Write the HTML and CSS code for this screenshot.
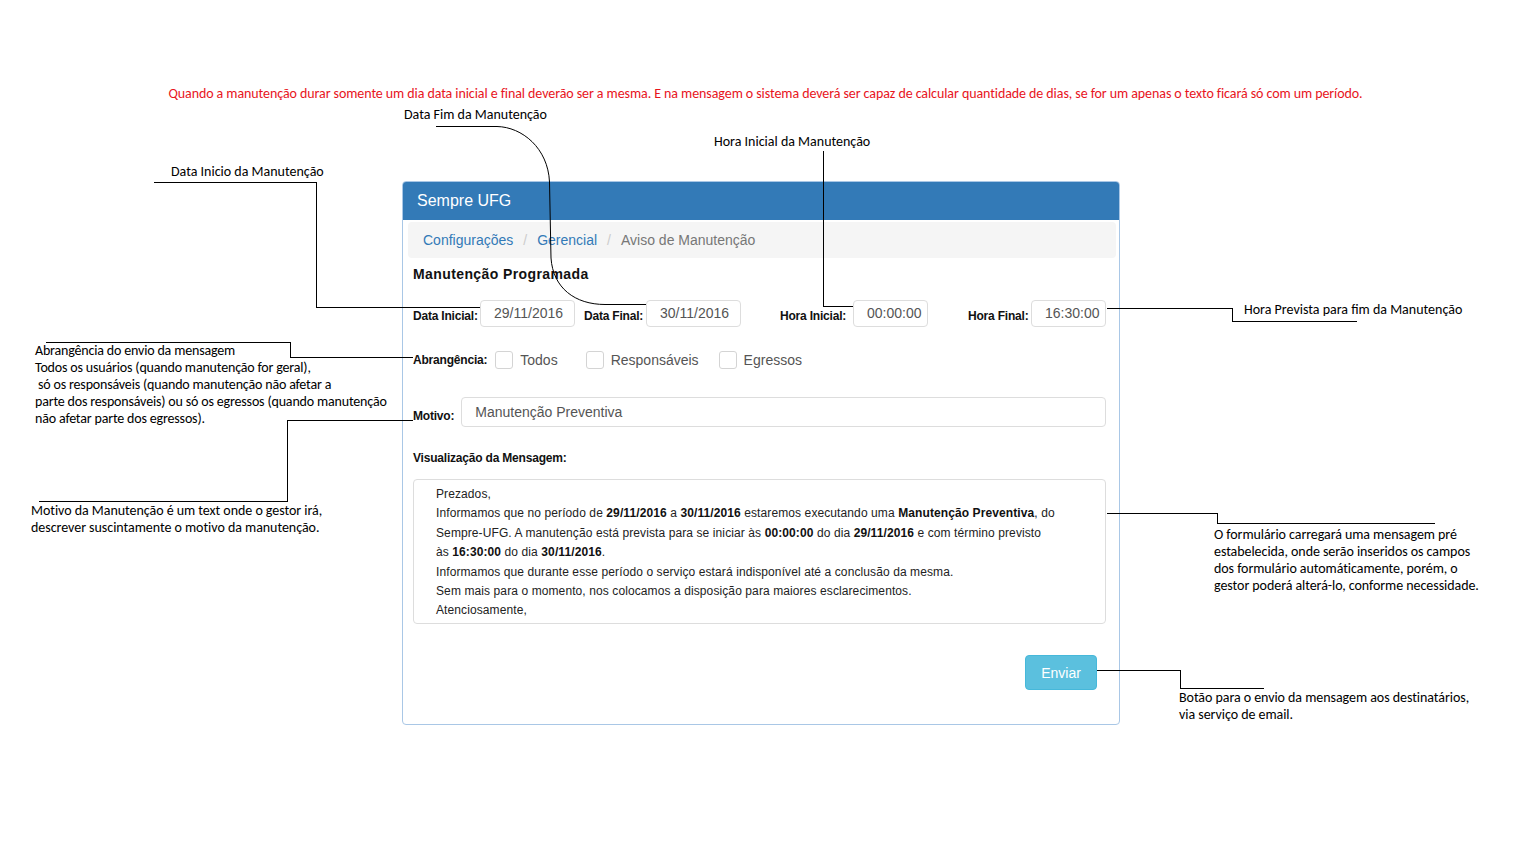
FILE: index.html
```html
<!DOCTYPE html>
<html lang="pt-BR">
<head>
<meta charset="utf-8">
<title>Sempre UFG - Aviso de Manutenção</title>
<link rel="stylesheet" href="styles.css">
</head>
<body>
<div class="canvas">
  <p class="note note-red">Quando a manutenção durar somente um dia data inicial e final deverão ser a mesma. E na mensagem o sistema deverá ser capaz de calcular quantidade de dias, se for um apenas o texto ficará só com um período.</p>

  <section class="panel">
    <header class="panel-heading">Sempre UFG</header>
    <div class="panel-body">
      <nav class="breadcrumb">
        <a class="crumb-link">Configurações</a><span class="crumb-sep">/</span><a class="crumb-link">Gerencial</a><span class="crumb-sep">/</span><span class="crumb-active">Aviso de Manutenção</span>
      </nav>
      <div class="form">
        <h2 class="form-title">Manutenção Programada</h2>
        <div class="row-dates">
          <div class="field g1"><label class="lbl">Data Inicial:</label><span class="input w95">29/11/2016</span></div>
          <div class="field g2"><label class="lbl">Data Final:</label><span class="input w95">30/11/2016</span></div>
          <div class="field g3"><label class="lbl">Hora Inicial:</label><span class="input w75">00:00:00</span></div>
          <div class="field g4"><label class="lbl">Hora Final:</label><span class="input w75">16:30:00</span></div>
        </div>
        <div class="row-scope">
          <label class="lbl">Abrangência:</label>
          <span class="check c1"></span><span class="check-text">Todos</span>
          <span class="check c2"></span><span class="check-text">Responsáveis</span>
          <span class="check c2b"></span><span class="check-text">Egressos</span>
        </div>
        <div class="row-motivo">
          <label class="lbl">Motivo:</label>
          <span class="input input-wide">Manutenção Preventiva</span>
        </div>
        <div class="lbl lbl-block">Visualização da Mensagem:</div>
        <div class="message">
          <p>Prezados,</p>
          <p>Informamos que no período de <b>29/11/2016</b> a <b>30/11/2016</b> estaremos executando uma <b>Manutenção Preventiva</b>, do</p>
          <p>Sempre-UFG. A manutenção está prevista para se iniciar às <b>00:00:00</b> do dia <b>29/11/2016</b> e com término previsto</p>
          <p>às <b>16:30:00</b> do dia <b>30/11/2016</b>.</p>
          <p>Informamos que durante esse período o serviço estará indisponível até a conclusão da mesma.</p>
          <p>Sem mais para o momento, nos colocamos a disposição para maiores esclarecimentos.</p>
          <p>Atenciosamente,</p>
        </div>
        <div class="actions"><button class="btn-send">Enviar</button></div>
      </div>
    </div>
  </section>

  <p class="note n-fim">Data Fim da Manutenção</p>
  <p class="note n-hini">Hora Inicial da Manutenção</p>
  <p class="note n-ini">Data Inicio da Manutenção</p>
  <p class="note n-hfim">Hora Prevista para fim da Manutenção</p>
  <p class="note n-abr">Abrangência do envio da mensagem<br>Todos os usuários (quando manutenção for geral),<br>&nbsp;só os responsáveis (quando manutenção não afetar a<br>parte dos responsáveis) ou só os egressos (quando manutenção<br>não afetar parte dos egressos).</p>
  <p class="note n-mot">Motivo da Manutenção é um text onde o gestor irá,<br>descrever suscintamente o motivo da manutenção.</p>
  <p class="note n-msg">O formulário carregará uma mensagem pré<br>estabelecida, onde serão inseridos os campos<br>dos formulário automáticamente, porém, o<br>gestor poderá alterá-lo, conforme necessidade.</p>
  <p class="note n-btn">Botão para o envio da mensagem aos destinatários,<br>via serviço de email.</p>

  <svg class="connectors" width="1531" height="857" viewBox="0 0 1531 857">
    <g fill="none" stroke="#000" stroke-width="1">
      <path class="crisp" d="M154 182.5 H316.5 V307.5 H480"/>
      <path d="M436 126.5 H497 C522 127 548 148 549.5 182 L551 258 C553 288 575 304.5 605 304.5 H646"/>
      <path class="crisp" d="M823.5 151 V306.5 H853"/>
      <path class="crisp" d="M1107 308.5 H1232.5 V321.5 H1357"/>
      <path class="crisp" d="M46 342.5 H290.5 V357.5 H413"/>
      <path class="crisp" d="M413 420.5 H287.5 V501.5 H39"/>
      <path class="crisp" d="M1107 513.5 H1217.5 V523.5 H1435"/>
      <path class="crisp" d="M1097 670.5 H1180.5 V688.5 H1264"/>
    </g>
  </svg>
</div>
</body>
</html>
```

FILE: styles.css
```css
* { box-sizing: border-box; }

html, body {
  margin: 0;
  padding: 0;
  background: #fff;
}

.canvas {
  position: relative;
  width: 1531px;
  height: 857px;
  overflow: hidden;
  padding-top: 181px;
  font-family: "Liberation Sans", Arial, sans-serif;
  color: #333;
}

/* ---------- annotations ---------- */
.note {
  position: absolute;
  margin: 0;
  font-family: Carlito, Lato, "Open Sans", sans-serif;
  font-size: 14px;
  line-height: 17px;
  color: #000;
  white-space: nowrap;
}
.note-red { left: 0; right: 0; top: 85px; text-align: center; color: #e8141c; letter-spacing: -0.08px; }
.n-fim { left: 404px; top: 106px; }
.n-hini { left: 714px; top: 133px; }
.n-ini { left: 171px; top: 163px; }
.n-hfim { left: 1244px; top: 301px; }
.n-abr { left: 35px; top: 342px; letter-spacing: -0.17px; }
.n-mot { left: 31px; top: 502px; letter-spacing: -0.04px; }
.n-msg { left: 1214px; top: 526px; letter-spacing: -0.06px; }
.n-btn { left: 1179px; top: 689px; letter-spacing: -0.05px; }

.connectors {
  position: absolute;
  left: 0;
  top: 0;
  z-index: 2;
  pointer-events: none;
}
.crisp { shape-rendering: crispEdges; }

/* ---------- panel ---------- */
.panel {
  margin-left: 402px;
  width: 718px;
  height: 544px;
  border: 1px solid #a9c7e6;
  border-radius: 4px;
  background: #fff;
  overflow: hidden;
}

.panel-heading {
  height: 38px;
  background: #337ab7;
  color: #fff;
  font-size: 16px;
  line-height: 38px;
  padding-left: 14px;
}

.panel-body {
  padding: 2px 3px 0 5px;
}

.breadcrumb {
  height: 36px;
  background: #f5f5f5;
  border-radius: 4px;
  padding: 0 15px;
  font-size: 14px;
  line-height: 36px;
  display: flex;
}
.crumb-link { color: #337ab7; }
.crumb-sep { color: #ccc; padding: 0 10px; }
.crumb-active { color: #777; }

.form {
  margin: 0 10px 0 5px;
}

.form-title {
  margin: 6px 0 0;
  font-size: 14px;
  line-height: 20px;
  font-weight: bold;
  color: #111;
  letter-spacing: 0.4px;
}

.lbl {
  font-size: 12px;
  font-weight: bold;
  color: #111;
  letter-spacing: -0.2px;
}

.input {
  display: block;
  height: 27px;
  border: 1px solid #ddd;
  border-radius: 4px;
  padding-left: 13px;
  font-size: 14px;
  line-height: 25px;
  color: #555;
  background: #fff;
}
.w95 { width: 95px; }
.w75 { width: 75px; }

.row-dates {
  display: flex;
  margin-top: 16px;
  height: 27px;
}
.field {
  display: flex;
  justify-content: space-between;
  align-items: center;
}
.field .lbl { padding-top: 5px; }
.g1 { width: 162px; }
.g2 { width: 157px; margin-left: 9px; }
.g3 { width: 148px; margin-left: 39px; }
.g4 { width: 138px; margin-left: 40px; }

.row-scope {
  display: flex;
  align-items: center;
  height: 28px;
  margin-top: 19px;
}
.check {
  width: 18px;
  height: 18px;
  border: 1px solid #d4d4d4;
  border-radius: 3px;
  background: #fff;
}
.c1 { margin-left: 8px; }
.c2 { margin-left: 28px; }
.c2b { margin-left: 20px; }
.check-text {
  margin-left: 7px;
  font-size: 14px;
  color: #555;
}

.row-motivo {
  display: flex;
  align-items: center;
  margin-top: 23px;
}
.row-motivo .lbl { padding-top: 7px; }
.input-wide {
  flex: 1;
  margin-left: 7px;
  height: 30px;
  line-height: 28px;
}

.lbl-block {
  margin-top: 21px;
  line-height: 20px;
}

.message {
  margin-top: 11px;
  height: 145px;
  border: 1px solid #ddd;
  border-radius: 4px;
  padding: 5px 20px 0 22px;
  font-size: 12px;
  line-height: 19.4px;
  color: #222;
  letter-spacing: 0.1px;
}
.message p { margin: 0; white-space: nowrap; }
.message b { font-weight: bold; color: #111; }

.actions {
  display: flex;
  justify-content: flex-end;
  margin-top: 31px;
  padding-right: 9px;
}
.btn-send {
  width: 72px;
  height: 35px;
  border: 1px solid #46b8da;
  border-radius: 4px;
  background: #5bc0de;
  color: #fff;
  font-family: "Liberation Sans", Arial, sans-serif;
  font-size: 14px;
  padding: 0;
}
```
